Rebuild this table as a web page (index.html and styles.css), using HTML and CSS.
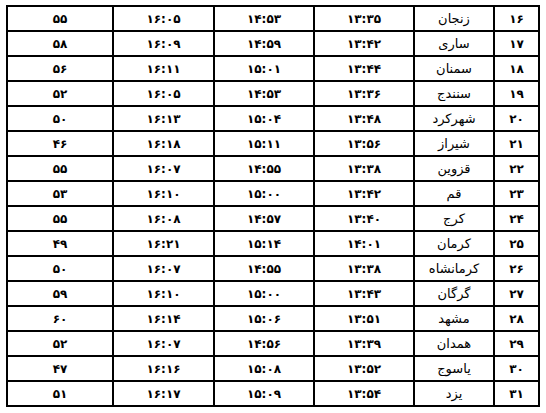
FILE: index.html
```html
<!DOCTYPE html>
<html lang="fa" dir="rtl">
<head>
<meta charset="utf-8">
<title>جدول اوقات</title>
<link rel="stylesheet" href="styles.css">
</head>
<body>
<table class="times">
<colgroup>
<col class="c-num"><col class="c-city"><col class="c-t"><col class="c-t"><col class="c-t3"><col class="c-last">
</colgroup>
<tbody>
<tr><td class="n">۱۶</td><td class="city">زنجان</td><td class="n">۱۳:۳۵</td><td class="n">۱۴:۵۳</td><td class="n">۱۶:۰۵</td><td class="n">۵۵</td></tr>
<tr><td class="n">۱۷</td><td class="city">ساری</td><td class="n">۱۳:۴۲</td><td class="n">۱۴:۵۹</td><td class="n">۱۶:۰۹</td><td class="n">۵۸</td></tr>
<tr><td class="n">۱۸</td><td class="city">سمنان</td><td class="n">۱۳:۴۴</td><td class="n">۱۵:۰۱</td><td class="n">۱۶:۱۱</td><td class="n">۵۶</td></tr>
<tr><td class="n">۱۹</td><td class="city">سنندج</td><td class="n">۱۳:۳۶</td><td class="n">۱۴:۵۳</td><td class="n">۱۶:۰۵</td><td class="n">۵۲</td></tr>
<tr><td class="n">۲۰</td><td class="city">شهرکرد</td><td class="n">۱۳:۴۸</td><td class="n">۱۵:۰۴</td><td class="n">۱۶:۱۳</td><td class="n">۵۰</td></tr>
<tr><td class="n">۲۱</td><td class="city">شیراز</td><td class="n">۱۳:۵۶</td><td class="n">۱۵:۱۱</td><td class="n">۱۶:۱۸</td><td class="n">۴۶</td></tr>
<tr><td class="n">۲۲</td><td class="city">قزوین</td><td class="n">۱۳:۳۸</td><td class="n">۱۴:۵۵</td><td class="n">۱۶:۰۷</td><td class="n">۵۵</td></tr>
<tr><td class="n">۲۳</td><td class="city">قم</td><td class="n">۱۳:۴۲</td><td class="n">۱۵:۰۰</td><td class="n">۱۶:۱۰</td><td class="n">۵۳</td></tr>
<tr><td class="n">۲۴</td><td class="city">کرج</td><td class="n">۱۳:۴۰</td><td class="n">۱۴:۵۷</td><td class="n">۱۶:۰۸</td><td class="n">۵۵</td></tr>
<tr><td class="n">۲۵</td><td class="city">کرمان</td><td class="n">۱۴:۰۱</td><td class="n">۱۵:۱۴</td><td class="n">۱۶:۲۱</td><td class="n">۴۹</td></tr>
<tr><td class="n">۲۶</td><td class="city">کرمانشاه</td><td class="n">۱۳:۳۸</td><td class="n">۱۴:۵۵</td><td class="n">۱۶:۰۷</td><td class="n">۵۰</td></tr>
<tr><td class="n">۲۷</td><td class="city">گرگان</td><td class="n">۱۳:۴۳</td><td class="n">۱۵:۰۰</td><td class="n">۱۶:۱۰</td><td class="n">۵۹</td></tr>
<tr><td class="n">۲۸</td><td class="city">مشهد</td><td class="n">۱۳:۵۱</td><td class="n">۱۵:۰۶</td><td class="n">۱۶:۱۴</td><td class="n">۶۰</td></tr>
<tr><td class="n">۲۹</td><td class="city">همدان</td><td class="n">۱۳:۳۹</td><td class="n">۱۴:۵۶</td><td class="n">۱۶:۰۷</td><td class="n">۵۲</td></tr>
<tr><td class="n">۳۰</td><td class="city">یاسوج</td><td class="n">۱۳:۵۲</td><td class="n">۱۵:۰۸</td><td class="n">۱۶:۱۶</td><td class="n">۴۷</td></tr>
<tr><td class="n">۳۱</td><td class="city">یزد</td><td class="n">۱۳:۵۴</td><td class="n">۱۵:۰۹</td><td class="n">۱۶:۱۷</td><td class="n">۵۱</td></tr>
</tbody>
</table>
</body>
</html>
```

FILE: styles.css
```css
html, body {
  margin: 0;
  padding: 0;
  background: #ffffff;
}

body {
  padding: 5px 0 0 6px;
  direction: ltr;
}

.times {
  direction: rtl;
  border-collapse: collapse;
  table-layout: fixed;
  width: 533px;
  font-family: "DejaVu Sans", sans-serif;
  color: #000;
}

.c-num { width: 45px; }
.c-city { width: 80px; }
.c-t { width: 100px; }
.c-t3 { width: 101px; }
.c-last { width: 106px; }

.times td {
  border: 2px solid #000;
  height: 23px;
  padding: 0;
  text-align: center;
  vertical-align: middle;
  line-height: 1;
}

.times td.n {
  font-weight: bold;
  font-size: 12px;
}

.times td.city {
  font-size: 13px;
}
```
